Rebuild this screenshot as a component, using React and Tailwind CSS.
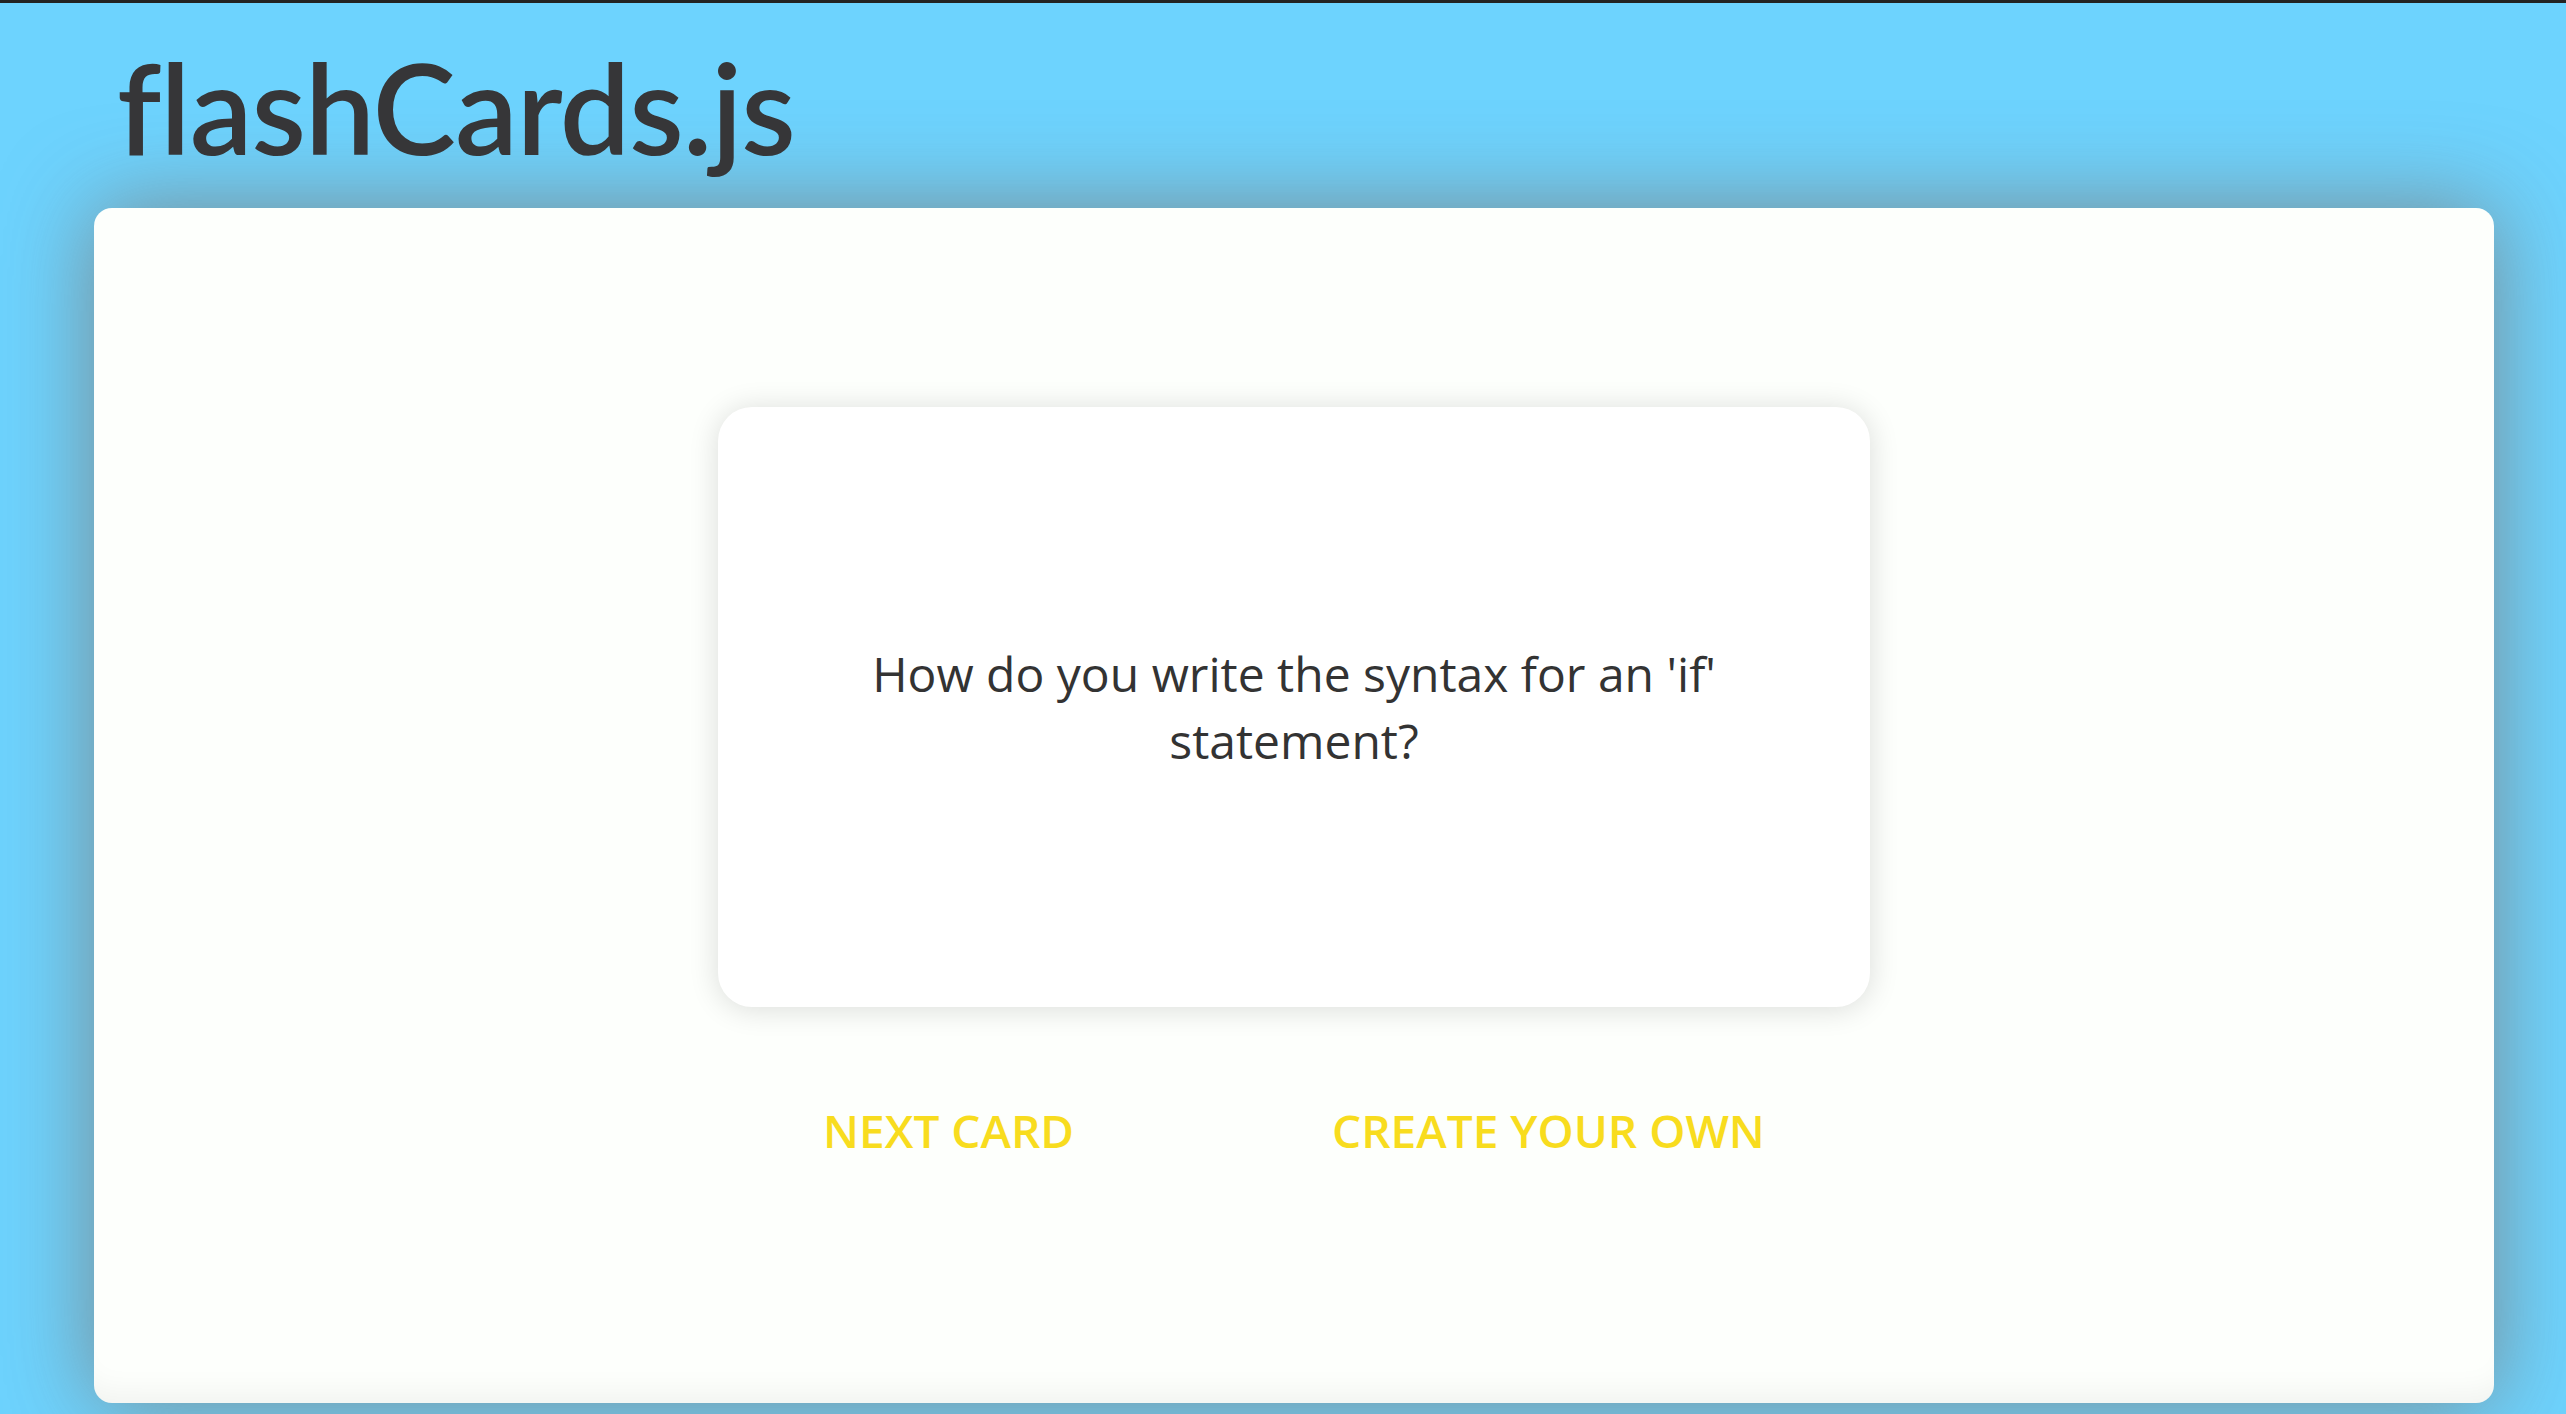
import React, { useState } from 'react';

const cards = [
  { question: "How do you write the syntax for an 'if' statement?" },
];

const Flashcard = ({ card }) => {
  return (
    <div className="w-[1152px] h-[600px] rounded-[34px] bg-white shadow-[0_2px_30px_rgba(0,0,0,0.14)] flex items-center justify-center px-[130px]">
      <p className="text-center text-[48px] leading-[67px] text-[#333333] font-['Open_Sans',sans-serif]">
        {card.question}
      </p>
    </div>
  );
};

const App = () => {
  const [index, setIndex] = useState(0);

  const nextCard = () => setIndex((i) => (i + 1) % cards.length);

  return (
    <div className="min-h-screen bg-[#6dd3fe] border-t-[3px] border-[#232323] overflow-hidden">
      {/* Header */}
      <header className="pl-[117px] pt-[42px] h-[205px]">
        <h1 className="text-[125px] leading-[125px] font-semibold text-[#363638] font-['Lato',sans-serif] tracking-[-1px]">
          flashCards.js
        </h1>
      </header>

      {/* Main panel */}
      <main className="ml-[94px] w-[2400px] h-[1195px] rounded-[18px] bg-[#fdfffc] shadow-[0_0_90px_rgba(125,125,125,0.85),inset_0_-30px_30px_-20px_rgba(0,0,0,0.05)] flex flex-col items-center pt-[199px]">
        <Flashcard card={cards[index]} />

        <div className="flex items-center gap-[258px] mt-[97px] font-['Open_Sans',sans-serif] font-semibold text-[46px] leading-[52px] text-[#f8dc1e]">
          <button onClick={nextCard} className="uppercase">
            Next Card
          </button>
          <button className="uppercase">Create Your Own</button>
        </div>
      </main>
    </div>
  );
};

export default App;
